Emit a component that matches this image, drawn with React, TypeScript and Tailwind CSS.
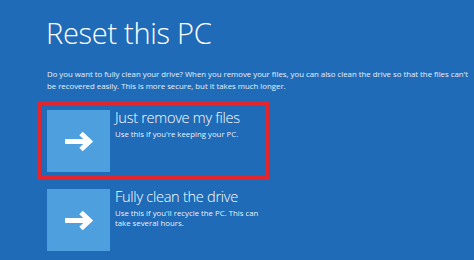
import type { ReactNode } from 'react';

// Windows "Reset this PC" recovery screen, first option highlighted in red.
export default function App() {
  return (
    <div
      className="flex h-[260px] w-[474px] flex-col overflow-hidden bg-[#1f6bb7] pl-[37px] text-white"
      style={{ fontFamily: '"Open Sans", "Noto Sans", sans-serif' }}
    >
      <h1 className="mt-[18px] ml-[9px] text-[29px] leading-none font-light tracking-[-0.01em]">
        Reset this PC
      </h1>

      <p className="mt-[22px] ml-[10px] text-[7.8px] leading-[11.5px] whitespace-nowrap text-white/90">
        <span className="block">
          Do you want to fully clean your drive? When you remove your files, you can also clean the
          drive so that the files can&apos;t
        </span>
        <span className="block">
          be recovered easily. This is more secure, but it takes much longer.
        </span>
      </p>

      <div className="mt-[9px] h-[79px] w-[232px] border-4 border-[#e3262d] pt-[5px] pl-[6px]">
        <Option title="Just remove my files">Use this if you&apos;re keeping your PC.</Option>
      </div>

      <div className="mt-[9px] ml-[10px]">
        <Option title="Fully clean the drive">
          Use this if you&apos;ll recycle the PC. This can
          <br />
          take several hours.
        </Option>
      </div>
    </div>
  );
}

function Option({ title, children }: { title: string; children: ReactNode }) {
  return (
    <div className="flex gap-[5px]">
      <div className="flex h-[62px] w-[63px] shrink-0 items-center justify-center bg-[#4d9fdd]">
        <Arrow />
      </div>
      <div className="flex flex-col">
        <div className="text-[14.6px] leading-none font-light tracking-[-0.02em]">{title}</div>
        <div className="mt-[4px] text-[7.8px] leading-[10px] text-white/95">{children}</div>
      </div>
    </div>
  );
}

function Arrow() {
  return (
    <svg width="30" height="21" viewBox="0 0 30 21" fill="none">
      <path d="M1 10.5H25" stroke="white" strokeWidth="5" />
      <path d="M17 2.5L25.5 10.5L17 18.5" stroke="white" strokeWidth="5" strokeLinejoin="miter" />
    </svg>
  );
}
